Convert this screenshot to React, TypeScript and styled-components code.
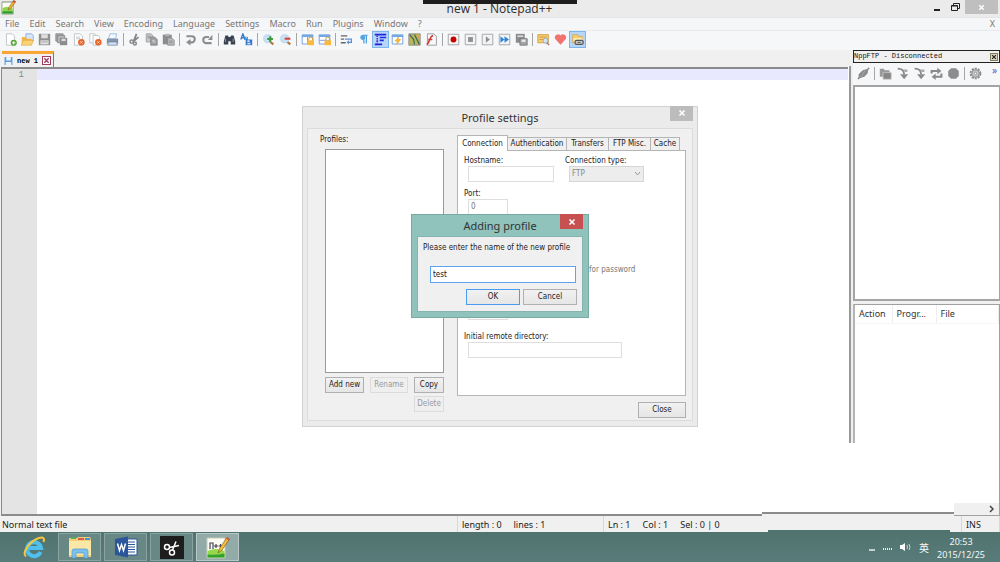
import React from "react";
import styled, { createGlobalStyle } from "styled-components";

const ui = `"Noto Sans", "Open Sans", "Noto Sans CJK SC", sans-serif`;
const small = `"DejaVu Sans Condensed", "Open Sans", sans-serif`;
const mono = `"Liberation Mono", monospace`;

const Global = createGlobalStyle`
  * { box-sizing: border-box; }
  body { margin: 0; background: #fff; font-family: ${ui}; }
  button, input, select { font: inherit; margin: 0; }
`;

const Desktop = styled.div`
  position: relative;
  display: flex;
  flex-direction: column;
  min-height: 100vh;
  overflow: hidden;
`;

/* ---------- window frame ---------- */

const TitleBar = styled.header`
  position: relative;
  display: flex;
  justify-content: space-between;
  align-items: flex-start;
  height: 17px;
  padding: 0 2px 0 1px;
  background: #ebebeb;
`;

const TitleText = styled.h1`
  flex: 1;
  margin: 0;
  padding-left: 56px;
  text-align: center;
  font-family: "Open Sans", "Noto Sans", sans-serif;
  font-size: 12px;
  line-height: 18px;
  font-weight: 400;
  color: #2b2b2b;
`;

const TopTab = styled.div`
  position: absolute;
  top: 0;
  left: 50%;
  width: 154px;
  height: 4px;
  margin-left: -77px;
  background: #1e1e1e;
`;

const FrameButton = styled.button<{ $close?: boolean }>`
  display: grid;
  place-items: center;
  width: ${(p) => (p.$close ? 33 : 19)}px;
  height: 14px;
  padding: 0;
  border: 0;
  background: ${(p) => (p.$close ? "#bfbfbf" : "transparent")};
`;

const MenuBar = styled.nav`
  display: flex;
  align-items: center;
  gap: 10px;
  height: 14px;
  padding: 0 5px;
  background: #f5f6f7;
  border-top: 1px solid #e4e5e6;
  border-bottom: 1px solid #e9eaeb;
`;

const MenuItem = styled.button<{ $end?: boolean }>`
  padding: 0;
  border: 0;
  background: none;
  color: #777;
  font-family: ${ui};
  font-size: 9px;
  line-height: 12px;
  margin-left: ${(p) => (p.$end ? "auto" : "0")};
`;

const ToolBar = styled.div`
  display: flex;
  align-items: center;
  height: 19px;
  padding: 0 0 2px 2px;
  background: #f5f7f9;
`;

const Tool = styled.button<{ $on?: boolean }>`
  display: grid;
  place-items: center;
  width: 17px;
  height: 17px;
  padding: 0;
  border: 1px solid ${(p) => (p.$on ? "#7db4ec" : "transparent")};
  background: ${(p) => (p.$on ? "#b5d6f7" : "none")};
`;

const Separator = styled.span`
  width: 1px;
  height: 13px;
  margin: 0 2px;
  background: #a5a5a5;
`;

/* ---------- work area ---------- */

const Work = styled.div`
  position: relative;
  flex: 1;
  display: grid;
  grid-template-columns: 1fr 152px;
  background: #f0f0f0;
`;

const EditorColumn = styled.div`
  display: flex;
  flex-direction: column;
`;

const TabRow = styled.div`
  display: flex;
  align-items: flex-end;
  height: 17px;
  padding-left: 2px;
`;

const FileTab = styled.div`
  display: flex;
  align-items: center;
  gap: 4px;
  width: 52px;
  height: 16px;
  padding: 0 2px;
  border-top: 3px solid #faa634;
  border-right: 1px solid #777;
  background: #f1f1f1;
  font-family: "Liberation Mono", monospace;
  font-weight: 700;
  font-size: 7px;
  line-height: 12px;
  white-space: nowrap;
`;

const TabClose = styled.button`
  display: grid;
  place-items: center;
  width: 9px;
  height: 9px;
  padding: 0;
  margin-left: auto;
  border: 1px solid #a33b60;
  background: #fff;
`;

const Editor = styled.div`
  flex: 1;
  display: grid;
  grid-template-columns: 35px 1fr;
  border: 2px solid #8b8b8b;
  border-left: 1px solid #8b8b8b;
  border-right: 0;
  margin-left: 1px;
  background: #fff;
`;

const Gutter = styled.div`
  padding-right: 13px;
  background: #e4e4e4;
  color: #888;
  font-family: ${mono};
  font-size: 9px;
  line-height: 12px;
  text-align: right;
`;

const CodeLine = styled.div`
  height: 11px;
  background: #e8e8ff;
`;

const Side = styled.aside`
  display: grid;
  grid-template-columns: 5px 1fr;
  grid-template-rows: auto 1fr 13px;
`;

const Splitter = styled.div`
  margin-top: 16px;
  border-left: 1px solid #fff;
  border-right: 2px solid #f0f0f0;
  background: #999;
`;

const Dock = styled.div`
  display: flex;
  flex-direction: column;
`;

const DockCaption = styled.div`
  display: flex;
  justify-content: space-between;
  align-items: center;
  height: 13px;
  padding-right: 1px;
  border: 1px solid #222;
  font-family: ${mono};
  font-size: 7px;
  line-height: 11px;
  color: #111;
  white-space: nowrap;
`;

const CaptionClose = styled.button`
  display: grid;
  place-items: center;
  width: 8px;
  height: 8px;
  padding: 0;
  border: 1px solid #857e5e;
  background: #ddd8bd;
`;

const DockTools = styled.div`
  display: flex;
  align-items: center;
  height: 22px;
  padding: 0 3px 2px 2px;
  background: #f5f7f9;
`;

const More = styled.span`
  margin-left: auto;
  padding-bottom: 7px;
  font-size: 10px;
  line-height: 12px;
  color: #5a5ad0;
`;

const TreeBox = styled.div`
  height: 216px;
  margin-bottom: 3px;
  border: 2px solid #a4a4a4;
  border-right-width: 1px;
  background: #fff;
`;

const QueueBox = styled.div`
  height: 139px;
  border: 1px solid #a0a0a0;
  border-left: 2px solid #b4b4b4;
  border-bottom: 0;
  background: #fff;
`;

const Queue = styled.table`
  width: 100%;
  border-collapse: collapse;
  table-layout: fixed;
  font-size: 9px;
  line-height: 18px;
  color: #333;

  th {
    padding: 0 0 0 4px;
    font-weight: 400;
    text-align: left;
    border-right: 1px solid #eee;
    border-bottom: 1px solid #f6f6f6;
    white-space: nowrap;
  }
`;

const SideRest = styled.div`
  grid-column: 1 / -1;
  border-right: 1px solid #a0a0a0;
  background: #fff;
`;

const SideScroll = styled.div`
  grid-column: 1 / -1;
  display: flex;
  align-items: center;
  justify-content: flex-end;
  width: 46px;
  justify-self: end;
  padding-right: 5px;
  border-right: 1px solid #a0a0a0;
  border-bottom: 1px solid #a0a0a0;
`;

const BottomStrip = styled.div`
  position: absolute;
  right: 46px;
  bottom: 0;
  width: 192px;
  height: 13px;
  border-bottom: 2px solid #f0f0f0;
  background: linear-gradient(#fff 9px, #8b8b8b 9px);
`;

const StatusBar = styled.footer`
  display: grid;
  grid-template-columns: 1fr 146px 358px 38px;
  height: 16px;
  background: #f0f0f0;
  font-size: 9px;
  line-height: 17px;
  color: #222;
`;

const StatusCell = styled.div<{ $gap?: number }>`
  display: flex;
  gap: ${(p) => p.$gap || 0}px;
  padding-left: ${(p) => (p.$gap ? 4 : 2)}px;
  border-right: 1px solid #d8d8d8;
  white-space: nowrap;
`;

/* ---------- taskbar ---------- */

const TaskBar = styled.div`
  position: relative;
  display: flex;
  align-items: center;
  gap: 3px;
  height: 30px;
  padding-left: 13px;
  background: linear-gradient(#50736f, #587c7a);

  &::before {
    content: "";
    position: absolute;
    top: -2px;
    right: 50px;
    width: 182px;
    height: 2px;
    background: #50736f;
  }
`;

const TaskButton = styled.button<{ $plain?: boolean; $active?: boolean }>`
  display: grid;
  place-items: center;
  width: ${(p) => (p.$plain ? 42 : 43)}px;
  height: 28px;
  padding: 0;
  border: 1px solid ${(p) => (p.$plain ? "transparent" : p.$active ? "#b9c8c6" : "#8aa3a1")};
  background: ${(p) => (p.$plain ? "none" : p.$active ? "#92aaa8" : "#688886")};
`;

const Tray = styled.div`
  display: flex;
  align-items: center;
  gap: 8px;
  margin-left: auto;
  padding-right: 15px;
  color: #f4f8f8;
  font-size: 10px;
`;

const Clock = styled.time`
  padding-top: 1px;
  text-align: center;
  font-size: 9px;
  line-height: 13px;
`;

/* ---------- dialogs ---------- */

const Layer = styled.div`
  position: absolute;
  inset: 0 0 30px 0;
  display: grid;
  place-items: center;

  > * {
    grid-area: 1 / 1;
  }
`;

const Dialog = styled.section<{ $active?: boolean }>`
  display: flex;
  flex-direction: column;
  width: ${(p) => (p.$active ? 178 : 396)}px;
  padding: 0 ${(p) => (p.$active ? 5 : 4)}px 5px;
  border: 1px solid ${(p) => (p.$active ? "#76aaa3" : "#d2d2d2")};
  background: ${(p) => (p.$active ? "#8fc3bc" : "#ebebeb")};
  font-family: ${small};
  font-size: 8px;
  line-height: 10px;
  color: #1b1b1b;
`;

const DialogTitle = styled.header`
  position: relative;
  height: 21px;
  text-align: center;

  h2 {
    margin: 0;
    font-family: ${ui};
    font-size: 11px;
    line-height: 22px;
    font-weight: 400;
    color: #333;
  }
`;

const DialogClose = styled.button<{ $active?: boolean }>`
  position: absolute;
  top: -1px;
  right: 0;
  display: grid;
  place-items: center;
  width: 23px;
  height: 15px;
  padding: 0;
  border: 0;
  background: ${(p) => (p.$active ? "#c75050" : "#bcbcbc")};
`;

const PromptBody = styled.form`
  display: flex;
  flex-direction: column;
  padding: 6px 5px 6px 5px;
  border: 1px solid #83b5ae;
  background: #f0f0f0;

  label {
    white-space: nowrap;
  }
`;

const TextBox = styled.input<{ $w?: string; $focus?: boolean }>`
  display: block;
  width: ${(p) => p.$w || "100%"};
  height: ${(p) => (p.$focus ? 17 : 16)}px;
  padding: 0 2px;
  border: 1px solid ${(p) => (p.$focus ? "#5aa5f0" : "#dedede")};
  outline: 0;
  background: #fff;
  color: ${(p) => (p.$focus ? "#111" : "#777")};
`;

const PromptField = styled.div`
  padding: 13px 1px 6px 7px;
`;

const ButtonRow = styled.div`
  display: flex;
  justify-content: flex-end;
  gap: 3px;
`;

const PushButton = styled.button<{ $w: number; $primary?: boolean }>`
  width: ${(p) => p.$w}px;
  height: 16px;
  padding: 0;
  border: 1px solid ${(p) => (p.$primary ? "#4a9cf0" : "#b0b0b0")};
  background: linear-gradient(#f1f1f1, #e6e6e6);
  color: #1b1b1b;
  line-height: 12px;

  &:disabled {
    border-color: #dcdcdc;
    background: #efefef;
    color: #9a9a9a;
  }
`;

const SettingsBody = styled.div`
  display: grid;
  grid-template-columns: 119px 229px;
  column-gap: 13px;
  padding: 6px 7px 2px 17px;
  border: 1px solid #dcdcdc;
  background: #f0f0f0;
`;

const ProfileColumn = styled.div`
  display: flex;
  flex-direction: column;

  h3 {
    margin: 0 0 4px -5px;
    font-size: 8px;
    line-height: 10px;
    font-weight: 400;
  }
`;

const ProfileList = styled.div`
  height: 224px;
  border: 1px solid #999;
  background: #fff;
`;

const ProfileButtons = styled.div`
  display: grid;
  grid-template-columns: 39px 38px 30px;
  justify-content: space-between;
  gap: 3px 5px;
  padding: 4px 0 0;

  :last-child {
    grid-column: 3;
  }
`;

const SettingsColumn = styled.div`
  display: flex;
  flex-direction: column;
  align-items: stretch;
`;

const Tabs = styled.div`
  display: flex;
  align-items: flex-end;
  height: 15px;
`;

const Tab = styled.button<{ $w: number; $on?: boolean }>`
  position: relative;
  width: ${(p) => p.$w}px;
  height: ${(p) => (p.$on ? 16 : 13)}px;
  margin-bottom: ${(p) => (p.$on ? -1 : 0)}px;
  padding: 0;
  border: 1px solid #b5b5b5;
  border-bottom: 0;
  border-left-width: ${(p) => (p.$on ? 1 : 0)}px;
  background: ${(p) => (p.$on ? "#fff" : "#f0f0f0")};
  color: #1b1b1b;
  line-height: 11px;
  white-space: nowrap;
`;

const TabPanel = styled.div`
  display: flex;
  flex-direction: column;
  height: 246px;
  padding: 5px 6px;
  border: 1px solid #b5b5b5;
  background: #fff;
  margin-bottom: 6px;
`;

const FieldRow = styled.div<{ $h: number }>`
  display: grid;
  grid-template-columns: 101px 1fr;
  height: ${(p) => p.$h}px;
`;

const Field = styled.div<{ $wide?: boolean }>`
  grid-column: ${(p) => (p.$wide ? "1 / -1" : "auto")};
  display: flex;
  flex-direction: column;
  align-items: flex-start;
  white-space: nowrap;

  input,
  select {
    margin-left: 4px;
  }
`;

const TypeWrap = styled.div`
  position: relative;

  svg {
    position: absolute;
    top: 5px;
    right: 3px;
  }
`;

const TypeSelect = styled.select`
  appearance: none;
  display: block;
  width: 75px;
  height: 16px;
  padding: 0 2px;
  border: 1px solid #d6d6d6;
  border-radius: 0;
  background: #ededed;
  color: #888;
  opacity: 1;
`;

const AskRow = styled.label`
  display: flex;
  align-items: center;
  gap: 28px;
  height: 14px;
  margin-bottom: 27px;
  padding-left: 88px;
  color: #777;

  input {
    width: 9px;
    height: 9px;
  }
`;

const CloseRow = styled.div`
  display: flex;
  justify-content: flex-end;
`;

/* ---------- icons ---------- */

const Svg = ({ s = 14, children }: { s?: number; children: React.ReactNode }) => (
  <svg width={s} height={s} viewBox="0 0 16 16" fill="none" aria-hidden="true">
    {children}
  </svg>
);

const Cross = ({ c, s = 8 }: { c: string; s?: number }) => (
  <svg width={s} height={s} viewBox="0 0 8 8" aria-hidden="true">
    <path d="M1.5 1.5l5 5M6.5 1.5l-5 5" stroke={c} strokeWidth="1.6" />
  </svg>
);

const NotepadIcon = ({ s }: { s: number }) => (
  <Svg s={s}>
    <path d="M1 2h12v13H1z" fill="#fdfdf4" stroke="#7d8a6c" strokeWidth=".8" />
    <path d="M1.5 9q4-3 11 0v5.500h-11z" fill="#8ed64a" />
    <path d="M1.500 12h11v2.500h-11z" fill="#2f9c3a" />
    <path d="M2 2.500h10" stroke="#8aa" strokeDasharray="1 1" />
    <path d="M7.500 10.500l1-3 5-7 2 1.300-5 7.200z" fill="#f5b428" stroke="#8a5a1c" strokeWidth=".6" />
    <path d="M13 1l2.300 1.500" stroke="#d04a3a" strokeWidth="2" />
  </Svg>
);

const page = <path d="M3 1h7l3 3v11H3z" fill="#fff" stroke="#b8bcc2" />;
const floppy = (
  <>
    <path d="M1 1h14v14H1z" fill="#8f8f8f" />
    <path d="M4 1.500h8v5H4z" fill="#ddd" />
    <path d="M3 9h10v5H3z" fill="#e2e2e2" />
    <path d="M4 11h8" stroke="#999" />
  </>
);
const orangeDot = (
  <>
    <circle cx="11.500" cy="11.500" r="4" fill="#e8662a" />
    <path d="M10 10l3 3M13 10l-3 3" stroke="#fbd9c6" strokeWidth="1" />
  </>
);
const lock = (
  <>
    <path d="M9.500 9V7.500a2.500 2.500 0 015 0V9" stroke="#d79a2c" strokeWidth="1.200" />
    <path d="M8 9h8v6H8z" fill="#f8b93c" />
  </>
);
const box = <path d="M1.500 1.500h13v13h-13z" fill="#f4f4f4" stroke="#9a9a9a" />;
const miniWindow = (
  <>
    <path d="M1.500 2.500h13v11h-13z" fill="#fff" stroke="#5d94d8" />
    <path d="M1 2h14v3H1z" fill="#72a8e6" />
  </>
);

const icons: Record<string, React.ReactNode> = {
  new: (<>{page}<circle cx="12" cy="12" r="3.800" fill="#58a83c" /><path d="M12 10v4M10 12h4" stroke="#fff" strokeWidth="1.300" /></>),
  open: (<><path d="M6 1h7l2 2v7H6z" fill="#d7e7fa" stroke="#7ea6dc" /><path d="M1 5h5l1 2h6v7H1z" fill="#f3b648" /><path d="M0 15l3-6h12l-2 6z" fill="#fbd478" stroke="#e0a238" strokeWidth=".7" /></>),
  save: floppy,
  saveAll: (<><path d="M1 1h9v9H1z" fill="#a8a8a8" stroke="#888" /><path d="M3 3h9v9H3z" fill="#b5b5b5" stroke="#888" /><path d="M6 6h9v9H6z" fill="#8c8c8c" /><path d="M8 7h5v3H8z" fill="#ddd" /></>),
  close: (<>{page}<path d="M5 5h5M5 7h5" stroke="#bbb" />{orangeDot}</>),
  closeAll: (<><path d="M1 1h6l2 2v9H1z" fill="#fff" stroke="#bbb" /><path d="M5 3h6l2 2v10H5z" fill="#fff" stroke="#bbb" />{orangeDot}</>),
  print: (<><path d="M5 1h8l-1 6H3z" fill="#f4f9ff" stroke="#8eb0d6" /><path d="M1 7h14v6H1z" fill="#8496ac" /><path d="M3 11h10l1 4H2z" fill="#d2e2f2" stroke="#64788e" strokeWidth=".8" /></>),
  cut: (<><path d="M10.500 1L7 10M13 5l-6 5" stroke="#858585" strokeWidth="2.200" /><circle cx="4.500" cy="10.500" r="2" stroke="#8a8a8a" strokeWidth="1.800" /><circle cx="8.500" cy="13" r="1.800" stroke="#8a8a8a" strokeWidth="1.800" /></>),
  copy: (<><path d="M1.500 1h6l2 2v8h-8z" fill="#c8c8c8" stroke="#999" /><path d="M3 4h4M3 6h4" stroke="#888" /><path d="M7 5h5l3 3v7H7z" fill="#9d9d9d" stroke="#888" /><path d="M9 9h3M9 11h4" stroke="#e4e4e4" /></>),
  paste: (<><path d="M1 2h11v12H1z" fill="#8c8c8c" /><path d="M4 1h5v3H4z" fill="#b5b5b5" /><path d="M7 6h5l3 3v6H7z" fill="#bbb" stroke="#888" /><path d="M9 10h4M9 12h4" stroke="#888" /></>),
  undo: (<><path d="M3 4h6.500a3.500 3.500 0 010 7.500H7" stroke="#8d8d8d" strokeWidth="2.600" /><path d="M8 7.500v8l-5.500-4z" fill="#8d8d8d" /></>),
  redo: (<><path d="M13 12.500H6.500a3.500 3.500 0 010-7.500H10" stroke="#8d8d8d" strokeWidth="2.600" /><path d="M8.500 8.500H14V2z" fill="#8d8d8d" /></>),
  find: (<><path d="M3 3h3l1 2h2l1-2h3l2 7v4H9.500v-4h-3v4H1v-4z" fill="#39424e" /><path d="M3 7v4M12.500 7v4" stroke="#9fb0c4" /></>),
  replace: (<><path d="M1 8l2.500-7L6 8M2 6h3" stroke="#3b6fc8" strokeWidth="1.600" /><path d="M5 4l4 4M9 4.500V8H5" stroke="#3aa1d8" strokeWidth="1.500" /><path d="M7 8h8v7H7z" fill="#3472cc" /><path d="M9 9h3v2H9zM9 12h4v2H9z" fill="#c9e0fb" /></>),
  zoomIn: (<><path d="M9 10l5 4" stroke="#b4743c" strokeWidth="2.500" /><circle cx="7" cy="7" r="5" fill="#c6e2f6" stroke="#b4d2ea" /><path d="M10 4v7M6.500 7.500h7" stroke="#3e9a3a" strokeWidth="2.400" /></>),
  zoomOut: (<><path d="M9 10l5 4" stroke="#b4743c" strokeWidth="2.500" /><circle cx="7" cy="7" r="5" fill="#c6e2f6" stroke="#b4d2ea" /><path d="M7 7h7" stroke="#e04040" strokeWidth="2.600" /></>),
  syncV: (<>{miniWindow}<path d="M8 5v8" stroke="#5d94d8" />{lock}</>),
  syncH: (<>{miniWindow}<path d="M2 9h12" stroke="#5d94d8" />{lock}</>),
  wrap: (<><path d="M1 3.500h8M1 7.500h4M1 12h6" stroke="#666" strokeWidth="1.600" /><path d="M6 7.500h8v4h-4" stroke="#5e90d0" strokeWidth="1.600" /><path d="M11 9l-3 2.500 3 2.500z" fill="#5e90d0" /></>),
  pilcrow: (<><path d="M8.500 3v10M11.500 3v10M7 3h6" stroke="#55a4e2" strokeWidth="1.600" /><circle cx="7" cy="5.500" r="3" fill="#55a4e2" /></>),
  indent: (<><path d="M1 2h14M7 5.500h8M7 9h5M1 14h9" stroke="#2222e0" strokeWidth="2" /><path d="M4 3v10" stroke="#5522d0" strokeWidth="2" strokeDasharray="2 1" /></>),
  userLang: (<>{miniWindow}<path d="M9 5l-4 5h3l-1 4 5-6H9z" fill="#f7bb2c" stroke="#de9726" strokeWidth=".6" /></>),
  docMap: (<><path d="M1 1h14v14H1z" fill="#b7b858" stroke="#888" /><path d="M2 2l5 6 1 6M8 2l6 12" stroke="#466" strokeWidth="1.500" /><path d="M9 2h5v5z" fill="#e0a650" /></>),
  funcList: (<><path d="M3 1h8l3 3v11H3z" fill="#f9f9f9" stroke="#8c8c8c" /><path d="M2 14C6 13 5 4 10 3M4 8h5" stroke="#d23a3a" strokeWidth="2" /></>),
  record: (<>{box}<circle cx="8" cy="8" r="3.600" fill="#c80000" /></>),
  stop: (<>{box}<path d="M5 5h6v6H5z" fill="#909090" /></>),
  play: (<>{box}<path d="M6 4l5 4-5 4z" fill="#909090" /></>),
  fast: (<>{box}<path d="M3 4l5 4-5 4zM8 4l5.500 4L8 12z" fill="#2f83dc" /></>),
  saveMacro: (<><path d="M1 1h11v11H1z" fill="#8c8c8c" /><path d="M3 3h7v2H3z" fill="#ddd" /><path d="M6 7h9v8H6z" fill="#a2a2a2" stroke="#777" /><path d="M8 8h5v3H8z" fill="#e8e8e8" /></>),
  explore: (<><path d="M1 2h13v10H1z" fill="#f6cf72" stroke="#cf9840" /><path d="M3 5h9M3 8h6" stroke="#cf8f40" /><circle cx="10.500" cy="9.500" r="3" fill="#cfe6f8" stroke="#8fa6be" /><path d="M12 12l3 3" stroke="#a66" strokeWidth="1.500" /></>),
  heart: (<path d="M8 14.500L1.500 7.500a4 4 0 016.500-4.500 4 4 0 016.500 4.500z" fill="#f0736f" />),
  ftp: (<><path d="M2 2h6l1 2h5v8H2z" fill="#f7cc68" stroke="#d2a144" strokeWidth=".8" /><path d="M3 6h11v4H3z" fill="#fce8ac" /><rect x="5" y="9" width="10" height="5" rx="2" stroke="#555" strokeWidth="1.500" fill="#ccc" /><path d="M8 11.500h4" stroke="#444" /></>),
  plug: (<><path d="M1 15l3-3M12 4l3-3" stroke="#777" strokeWidth="1.500" /><path d="M2 9l5-5 3-1 4-1-1 6-4 4-3 1-4 1z" fill="#8b8b8b" /><path d="M10 4l-5 8" stroke="#bbb" strokeWidth=".8" /></>),
  folders: (<><path d="M1 2h5l1 2h6v8H1z" fill="#9a9a9a" /><path d="M5 7h10v8H5z" fill="#868686" stroke="#c5c5c5" /></>),
  download: (<><path d="M2 2q8 0 8 7" stroke="#8a8a8a" strokeWidth="2.400" /><path d="M5 9h10l-5 6z" fill="#8a8a8a" /><path d="M9 3h5v3h-3z" fill="#aaa" /></>),
  refresh: (<><path d="M2 8V5h8M14 8v4H6" stroke="#8a8a8a" strokeWidth="2.600" /><path d="M9 1l5 4-5 4zM7 8l-5 4 5 4z" fill="#8a8a8a" /></>),
  abort: (<path d="M5 1.500h6L14.500 5v6L11 14.500H5L1.500 11V5z" fill="#8d8d8d" />),
  gear: (<><circle cx="8" cy="8" r="6" stroke="#8c8c8c" strokeWidth="2.400" strokeDasharray="2.600 1.200" /><circle cx="8" cy="8" r="4.500" fill="#c8c8c8" stroke="#999" strokeWidth="1.500" /><circle cx="8" cy="8" r="1.500" fill="#fff" stroke="#888" /></>),
};

const toolGroups = [
  ["new", "open", "save", "saveAll", "close", "closeAll", "print"],
  ["cut", "copy", "paste"],
  ["undo", "redo"],
  ["find", "replace"],
  ["zoomIn", "zoomOut"],
  ["syncV", "syncH"],
  ["wrap", "pilcrow", "indent", "userLang", "docMap", "funcList"],
  ["record", "stop", "play", "fast", "saveMacro"],
  ["explore", "heart", "ftp"],
];
const activeTools = ["indent", "ftp"];
const dockGroups = [["plug"], ["folders", "download", "download", "refresh", "abort"], ["gear"]];
const menus = ["File", "Edit", "Search", "View", "Encoding", "Language", "Settings", "Macro", "Run", "Plugins", "Window", "?"];

const ToolGroups = ({ groups }: { groups: string[][] }) => (
  <>
    {groups.map((group, g) => (
      <React.Fragment key={g}>
        {g > 0 && <Separator />}
        {group.map((name, i) => (
          <Tool key={i} $on={activeTools.includes(name)} aria-label={name}>
            <Svg s={13}>{icons[name]}</Svg>
          </Tool>
        ))}
      </React.Fragment>
    ))}
  </>
);

const ExplorerLogo = () => (
  <svg width="24" height="24" viewBox="0 0 24 24" fill="none" aria-hidden="true">
    <path d="M18.500 17A7 7 0 1119 13H7" stroke="#4fc0ee" strokeWidth="4" />
    <path d="M4 21.500C-1 18 8 6 17 3c4-1.500 6 0 4.500 4" stroke="#f5c840" strokeWidth="2" />
  </svg>
);

const FolderLogo = () => (
  <svg width="26" height="24" viewBox="0 0 26 24" aria-hidden="true">
    <path d="M2 3h8l1-1h12l1 2v18H2z" fill="#f0cf78" />
    <path d="M4 2h5v2H4z" fill="#4fae5a" />
    <path d="M11 3h6v2h-6z" fill="#db5a4a" />
    <path d="M18 3h5v2h-5z" fill="#4a90d8" />
    <path d="M2 6h22v14H2z" fill="#fbe7a6" />
    <path d="M5 23v-7q0-2 2-2h12q2 0 2 2v7h-4v-5H9v5z" fill="#7cc0ee" stroke="#4d98d2" strokeWidth=".7" />
  </svg>
);

const WordLogo = () => (
  <svg width="24" height="22" viewBox="0 0 24 22" aria-hidden="true">
    <path d="M11 3h12v16H11z" fill="#fff" stroke="#2b579a" />
    <path d="M14 6h7M14 8.500h7M14 11h7M14 13.500h7M14 16h7" stroke="#2b579a" />
    <path d="M1 3l13-2.500v21L1 19z" fill="#2b579a" />
    <path d="M3.500 7.500l2 7 2-6 2 6 2-7" fill="none" stroke="#fff" strokeWidth="1.500" />
  </svg>
);

const ScissorsLogo = () => (
  <svg width="24" height="23" viewBox="0 0 24 23" fill="none" stroke="#fff" aria-hidden="true">
    <path d="M0 0h24v23H0z" fill="#1d1d1d" stroke="none" />
    <circle cx="7" cy="11" r="2.500" strokeWidth="1.500" />
    <circle cx="12" cy="16.500" r="2.500" strokeWidth="1.500" />
    <path d="M9.500 11.500l9.500-2M12.500 14l3.500-8.500" strokeWidth="1.500" />
  </svg>
);

const NotepadLogo = () => (
  <svg width="26" height="25" viewBox="0 0 26 25" aria-hidden="true">
    <path d="M2 3h18v20H2z" fill="#fbfbf2" stroke="#c6cdbb" />
    <path d="M2.500 16q8-4 17 0v6.500h-17z" fill="#93d94a" />
    <path d="M2.500 19.500q8 1 17-1v4h-17z" fill="#34a02f" />
    <path d="M5 14V8h3v6M9 11h4M11 9v4M13.500 11h4M15.500 9v4" fill="none" stroke="#445" strokeWidth="1.200" />
    <path d="M13 18l1.500-4.500 7.500-11 2.500 1.500-7.500 11z" fill="#f6c03a" stroke="#8a5a20" strokeWidth=".7" />
    <path d="M21.500 3l3 2" stroke="#d0583c" strokeWidth="2" />
  </svg>
);

/* ---------- page ---------- */

export default function App() {
  return (
    <Desktop>
      <Global />
      <TitleBar>
        <NotepadIcon s={15} />
        <TitleText>new 1 - Notepad++</TitleText>
        <FrameButton aria-label="Minimize">
          <svg width="8" height="8"><path d="M1 7h6" stroke="#222" strokeWidth="2" /></svg>
        </FrameButton>
        <FrameButton aria-label="Restore">
          <svg width="9" height="9" fill="none"><path d="M2.500 2V.5h6v5H7M.5 2.500h6v5h-6z" stroke="#222" /><path d="M0 3h7" stroke="#222" /></svg>
        </FrameButton>
        <FrameButton $close aria-label="Close"><Cross c="#fff" s={7} /></FrameButton>
        <TopTab />
      </TitleBar>
      <MenuBar>
        {menus.map((m) => <MenuItem key={m}>{m}</MenuItem>)}
        <MenuItem $end>X</MenuItem>
      </MenuBar>
      <ToolBar><ToolGroups groups={toolGroups} /></ToolBar>

      <Work>
        <EditorColumn>
          <TabRow>
            <FileTab>
              <Svg s={10}>
                <path d="M1 1h14v14H1z" fill="#5c9be0" />
                <path d="M4 1h8v6H4zM3 10h10v5H3z" fill="#e9f3fd" />
              </Svg>
              new 1
              <TabClose aria-label="Close tab"><Cross c="#a33b60" s={7} /></TabClose>
            </FileTab>
          </TabRow>
          <Editor>
            <Gutter>1</Gutter>
            <CodeLine />
          </Editor>
        </EditorColumn>
        <Side>
          <Splitter />
          <Dock>
            <DockCaption>
              NppFTP - Disconnected
              <CaptionClose aria-label="Close panel"><Cross c="#222" s={6} /></CaptionClose>
            </DockCaption>
            <DockTools>
              <ToolGroups groups={dockGroups} />
              <More>»</More>
            </DockTools>
            <TreeBox />
            <QueueBox>
              <Queue>
                <colgroup><col width="37" /><col width="44" /><col /></colgroup>
                <thead><tr><th>Action</th><th>Progr...</th><th>File</th></tr></thead>
              </Queue>
            </QueueBox>
          </Dock>
          <SideRest />
          <SideScroll>
            <svg width="5" height="8" fill="none"><path d="M1 1l3 3-3 3" stroke="#444" strokeWidth="1.500" /></svg>
          </SideScroll>
        </Side>
        <BottomStrip />
      </Work>

      <StatusBar>
        <StatusCell>Normal text file</StatusCell>
        <StatusCell $gap={12}><span>length : 0</span><span>lines : 1</span></StatusCell>
        <StatusCell $gap={12}><span>Ln : 1</span><span>Col : 1</span><span>Sel : 0 | 0</span></StatusCell>
        <StatusCell $gap={1}>INS</StatusCell>
      </StatusBar>

      <TaskBar>
        <TaskButton $plain aria-label="Internet Explorer"><ExplorerLogo /></TaskButton>
        <TaskButton aria-label="File Explorer"><FolderLogo /></TaskButton>
        <TaskButton aria-label="Word"><WordLogo /></TaskButton>
        <TaskButton aria-label="Snipping"><ScissorsLogo /></TaskButton>
        <TaskButton $active aria-label="Notepad++"><NotepadLogo /></TaskButton>
        <Tray>
          <svg width="6" height="12"><path d="M0 9h6" stroke="#e8eeee" strokeWidth="1.500" /></svg>
          <svg width="9" height="12"><path d="M0 8h9" stroke="#e8eeee" strokeWidth="2" strokeDasharray="1 1" /></svg>
          <svg width="11" height="10" fill="none"><path d="M0 3h2l3-2v8L2 7H0z" fill="#fff" /><path d="M7 3q1 2 0 4M9 2q2 3 0 6" stroke="#c5d2d0" /></svg>
          <span>英</span>
          <Clock>20:53<br />2015/12/25</Clock>
        </Tray>
      </TaskBar>

      <Layer>
        <Dialog aria-label="Profile settings">
          <DialogTitle>
            <h2>Profile settings</h2>
            <DialogClose aria-label="Close"><Cross c="#fff" s={8} /></DialogClose>
          </DialogTitle>
          <SettingsBody>
            <ProfileColumn>
              <h3>Profiles:</h3>
              <ProfileList />
              <ProfileButtons>
                <PushButton $w={39}>Add new</PushButton>
                <PushButton $w={38} disabled>Rename</PushButton>
                <PushButton $w={30}>Copy</PushButton>
                <PushButton $w={30} disabled>Delete</PushButton>
              </ProfileButtons>
            </ProfileColumn>
            <SettingsColumn>
              <Tabs role="tablist">
                <Tab role="tab" $w={51} $on>Connection</Tab>
                <Tab role="tab" $w={59}>Authentication</Tab>
                <Tab role="tab" $w={42}>Transfers</Tab>
                <Tab role="tab" $w={42}>FTP Misc.</Tab>
                <Tab role="tab" $w={29}>Cache</Tab>
              </Tabs>
              <TabPanel>
                <FieldRow $h={33}>
                  <Field>
                    <label htmlFor="host">Hostname:</label>
                    <TextBox id="host" $w="86px" />
                  </Field>
                  <Field>
                    <label htmlFor="type">Connection type:</label>
                    <TypeWrap>
                      <TypeSelect id="type" disabled><option>FTP</option></TypeSelect>
                      <svg width="7" height="6" fill="none"><path d="M1 1l2.500 3L6 1" stroke="#999" /></svg>
                    </TypeWrap>
                  </Field>
                </FieldRow>
                <FieldRow $h={74}>
                  <Field>
                    <label htmlFor="port">Port:</label>
                    <TextBox id="port" $w="40px" defaultValue="0" />
                  </Field>
                </FieldRow>
                <AskRow><input type="checkbox" />for password</AskRow>
                <FieldRow $h={28}>
                  <Field>
                    <TextBox $w="40px" aria-label="Timeout" />
                  </Field>
                </FieldRow>
                <FieldRow $h={30}>
                  <Field $wide>
                    <label htmlFor="dir">Initial remote directory:</label>
                    <TextBox id="dir" $w="154px" />
                  </Field>
                </FieldRow>
              </TabPanel>
              <CloseRow><PushButton $w={48}>Close</PushButton></CloseRow>
            </SettingsColumn>
          </SettingsBody>
        </Dialog>

        <Dialog $active aria-label="Adding profile">
          <DialogTitle>
            <h2>Adding profile</h2>
            <DialogClose $active aria-label="Close"><Cross c="#fff" s={8} /></DialogClose>
          </DialogTitle>
          <PromptBody onSubmit={(e) => e.preventDefault()}>
            <label htmlFor="name">Please enter the name of the new profile</label>
            <PromptField><TextBox id="name" $focus defaultValue="test" /></PromptField>
            <ButtonRow>
              <PushButton $w={54} $primary>OK</PushButton>
              <PushButton $w={54} type="button">Cancel</PushButton>
            </ButtonRow>
          </PromptBody>
        </Dialog>
      </Layer>
    </Desktop>
  );
}
